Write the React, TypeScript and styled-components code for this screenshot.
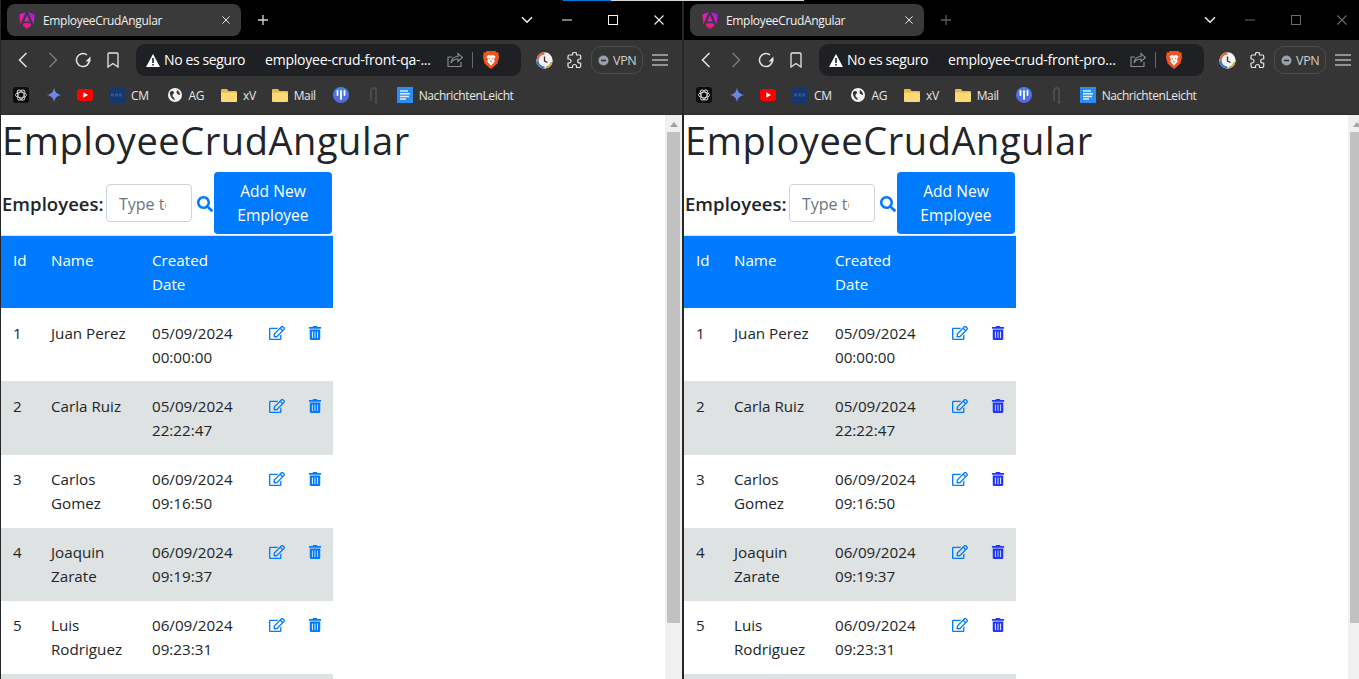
import React from "react";
import styled, { createGlobalStyle } from "styled-components";
import { FaRegEdit, FaTrashAlt, FaSearch } from "react-icons/fa";

const Global = createGlobalStyle`
  html, body { margin: 0; padding: 0; height: 100%; overflow: hidden; background: #000; }
  * { box-sizing: border-box; }
  #root { height: 679px; }
`;

const Desktop = styled.div`
  position: relative;
  display: flex;
  width: 1359px;
  height: 679px;
  overflow: hidden;
  background: #000;
  font-family: "Open Sans", "Noto Sans", sans-serif;
`;

const EdgeLine = styled.div`
  position: absolute;
  top: 0;
  left: 563px;
  width: 241px;
  height: 1px;
  background: linear-gradient(90deg, #0078d4 0 48px, #d8d8d8 48px);
`;

const Window = styled.section`
  display: flex;
  flex-direction: column;
  flex: none;
  width: 683px;
  height: 679px;
  padding: 0 1px;
  background: #262626;
`;

const TabStrip = styled.div`
  display: flex;
  align-items: flex-start;
  flex: none;
  height: 40px;
  padding: 4px 0 0 6px;
  background: #000;
  color: #fff;
`;

const Tab = styled.div`
  display: flex;
  align-items: center;
  width: 234px;
  height: 32px;
  padding: 0 11px 0 12px;
  border-radius: 8px;
  background: #3a3a3a;
`;

const TabTitle = styled.span`
  flex: 1;
  margin-left: 8px;
  font: 12px "Open Sans", sans-serif;
  letter-spacing: -0.33px;
  color: #f1f1f1;
`;

const NewTab = styled.div<{ $dim: boolean }>`
  display: flex;
  margin: 10px 0 0 16px;
  color: ${(p) => (p.$dim ? "#5e5e5e" : "#d8d8d8")};
`;

const Caption = styled.div<{ $dim: boolean }>`
  display: flex;
  align-items: center;
  height: 32px;
  margin-left: auto;
  color: ${(p) => (p.$dim ? "#6a6a6a" : "#f2f2f2")};
`;

const ChevronSlot = styled.div`
  display: flex;
  width: 12px;
  margin-right: 11px;
  color: #f2f2f2;
`;

const CaptionSlot = styled.div`
  display: flex;
  justify-content: center;
  width: 46px;
`;

const Toolbar = styled.div`
  display: flex;
  align-items: center;
  flex: none;
  height: 36px;
  padding: 4px 0 0 12px;
  background: #353535;
  color: #e6e6e6;
`;

const NavGroup = styled.div`
  display: flex;
  align-items: center;
  gap: 11px;
  margin-right: 14px;
`;

const NavIcon = styled.div<{ $dim?: boolean }>`
  display: flex;
  width: 19px;
  justify-content: center;
  color: ${(p) => (p.$dim ? "#7b7b7b" : "#e6e6e6")};
`;

const Omnibox = styled.div`
  display: flex;
  align-items: center;
  flex: none;
  width: 385px;
  height: 32px;
  padding: 0 22px 0 10px;
  border-radius: 9px;
  background: #1f2023;
  color: #fff;
  font: 14px "Open Sans", sans-serif;
`;

const SecurityText = styled.span`
  flex: none;
  width: 101px;
  margin-left: 4px;
  padding-bottom: 2px;
  letter-spacing: -0.38px;
  white-space: nowrap;
`;

const UrlText = styled.span`
  flex: 1;
  padding-bottom: 2px;
  letter-spacing: -0.22px;
  white-space: nowrap;
  overflow: hidden;
`;

const OmniDivider = styled.span`
  flex: none;
  width: 1px;
  height: 16px;
  margin: 0 10px 0 9px;
  background: #6a6a6a;
`;

const ToolGroup = styled.div`
  display: flex;
  align-items: center;
  margin-left: 8px;
`;

const ToolSlot = styled.div`
  display: flex;
  justify-content: center;
  width: 30px;
`;

const VpnPill = styled.div`
  display: flex;
  align-items: center;
  gap: 4px;
  width: 52px;
  height: 28px;
  margin-left: 2px;
  padding-left: 6px;
  border: 1px solid #4a4a4a;
  border-radius: 10px;
  font: 12.5px "Open Sans", sans-serif;
  letter-spacing: -0.3px;
  color: #cfcfcf;
`;

const MenuSlot = styled.div`
  display: flex;
  margin-left: 9px;
  color: #f0f0f0;
`;

const Bookmarks = styled.nav`
  display: flex;
  align-items: center;
  flex: none;
  height: 39px;
  padding: 0 0 0 12px;
  background: #353535;
  border-bottom: 1px solid #2c2c2c;
`;

const Bookmark = styled.div<{ $after?: number; $inner?: number }>`
  display: flex;
  align-items: center;
  gap: ${(p) => p.$inner ?? 6}px;
  margin-right: ${(p) => p.$after ?? 0}px;
  font: 12px "Open Sans", sans-serif;
  letter-spacing: -0.4px;
  color: #e8e8e8;
`;

const Viewport = styled.div`
  display: flex;
  flex: 1;
  min-height: 0;
  background: #fff;
`;

const Page = styled.main`
  flex: 1;
  min-width: 0;
  overflow: hidden;
  color: #212529;
  font: 16px/24px "Open Sans", "Noto Sans", sans-serif;
`;

const Heading = styled.h1`
  margin: 1px 0 8px 1px;
  font-size: 38px;
  font-weight: 400;
  letter-spacing: 0.56px;
  line-height: 48px;
  white-space: nowrap;
`;

const SearchRow = styled.div`
  display: flex;
  align-items: center;
  width: 332px;
  height: 62px;
  margin-bottom: 1px;
  padding-left: 1px;
`;

const SearchLabel = styled.label`
  flex: none;
  width: 102px;
  margin-right: 2px;
  padding-top: 2px;
  font-size: 18.5px;
  font-weight: 600;
  letter-spacing: 0.05px;
  white-space: nowrap;
`;

const SearchInput = styled.input`
  flex: none;
  width: 86px;
  height: 38px;
  padding: 8px 25px 6px 12px;
  border: 1px solid #ced4da;
  border-radius: 4px;
  font: 16px "Open Sans", sans-serif;
  &::placeholder { color: #6c757d; opacity: 1; }
`;

const SearchIcon = styled.div`
  display: flex;
  flex: none;
  margin: 2px 1px 0 5px;
  color: #007bff;
`;

const AddButton = styled.button`
  flex: none;
  width: 118px;
  height: 62px;
  padding: 6px 12px;
  border: 0;
  border-radius: 4px;
  background: #007bff;
  color: #fff;
  font: 15.6px/24px "Open Sans", sans-serif;
`;

const Table = styled.table`
  width: 332px;
  border-collapse: separate;
  border-spacing: 0;
  border-top: 1px solid #dee2e6;
  table-layout: fixed;
  font-size: 15.2px;
`;

const HeadRow = styled.tr`
  height: 72px;
  background: #007bff;
  color: #fff;
`;

const Th = styled.th<{ $w: number }>`
  width: ${(p) => p.$w}px;
  padding: 12px;
  font-weight: 400;
  text-align: left;
  vertical-align: top;
`;

const Row = styled.tr<{ $striped: boolean; $h: number }>`
  height: ${(p) => p.$h}px;
  background: ${(p) => (p.$striped ? "#dee2e2" : "#fff")};
`;

const Td = styled.td<{ $top: number }>`
  padding: ${(p) => p.$top}px 12px 0;
  vertical-align: top;
`;

const ActionCell = styled.td<{ $top: number }>`
  padding: ${(p) => p.$top}px 0 0;
  vertical-align: top;
`;

const Actions = styled.div<{ $trash: string }>`
  display: flex;
  align-items: center;
  gap: 23px;
  height: 24px;
  padding-left: 14px;
  color: #007bff;
  & > svg:last-child { color: ${(p) => p.$trash}; }
`;

const Scrollbar = styled.aside`
  display: flex;
  flex-direction: column;
  align-items: center;
  flex: none;
  width: 17px;
  background: #f0f0f0;
`;

const ScrollArrow = styled.div`
  flex: none;
  width: 0;
  height: 0;
  margin: 7px 0 5px;
  border-left: 4px solid transparent;
  border-right: 4px solid transparent;
  border-bottom: 5px solid #a3a3a3;
`;

const ScrollThumb = styled.div`
  flex: none;
  width: 13px;
  height: 491px;
  background: #c1c1c1;
`;

const rows = [
  { id: "1", name: "Juan Perez", date: "05/09/2024", time: "00:00:00", h: 73, top: 13 },
  { id: "2", name: "Carla Ruiz", date: "05/09/2024", time: "22:22:47", h: 74, top: 13 },
  { id: "3", name: "Carlos Gomez", date: "06/09/2024", time: "09:16:50", h: 73, top: 12 },
  { id: "4", name: "Joaquin Zarate", date: "06/09/2024", time: "09:19:37", h: 73, top: 12 },
  { id: "5", name: "Luis Rodriguez", date: "06/09/2024", time: "09:23:31", h: 73, top: 12 },
  { id: "", name: "", date: "", time: "", h: 73, top: 12 },
];

const AngularIcon = () => (
  <svg width="16" height="17" viewBox="0 0 16 17">
    <defs>
      <linearGradient id="ng" x1="0.9" y1="0" x2="0.2" y2="1">
        <stop offset="0" stopColor="#a01cf0" />
        <stop offset="0.5" stopColor="#e01ac0" />
        <stop offset="1" stopColor="#ff1060" />
      </linearGradient>
    </defs>
    <path d="M6.800 0 .3 2.400 1.400 12.500zM9.200 0l6.500 2.400-1.100 10.100zM8 3 5.300 9.600h5.400zM4.700 11.200h6.600l1 2.300L8 17l-4.300-3.500z" fill="url(#ng)" />
  </svg>
);

const Close = ({ size = 10 }: { size?: number }) => (
  <svg width={size} height={size} viewBox="0 0 10 10" stroke="currentColor" strokeWidth="1.100" fill="none">
    <path d="M.5.5l9 9M9.500.5l-9 9" />
  </svg>
);

const Warning = () => (
  <svg width="14" height="13" viewBox="0 0 14 13" style={{ flex: "none" }}>
    <path d="M7 0 14 13H0z" fill="#fff" />
    <path d="M6.200 4h1.600v5H6.200zM6.200 10h1.600v1.600H6.200z" fill="#1f2023" />
  </svg>
);

const Brave = () => (
  <svg width="16" height="18" viewBox="0 0 16 18" style={{ flex: "none" }}>
    <path d="M3.500 0h9l1 1.400 1.800-.2.700 5.200-1.600 6L9.500 17 8 18l-1.500-1-4.900-4.600L0 6.400l.7-5.200 1.800.2z" fill="#f4511e" />
    <path d="M3.400 5.600 6 3.800l2 .7 2-.7 2.600 1.800-1.700 2.800.9 2.200L8 14.800l-3.800-4.200.9-2.200z" fill="#fff" />
    <path d="M5.800 7.300 7 8M10.200 7.300 9 8M8 9.500v2" stroke="#f4511e" strokeWidth="1" fill="none" />
  </svg>
);

const HistoryBadge = () => (
  <svg width="17" height="17" viewBox="0 0 17 17">
    <circle cx="8.500" cy="8.500" r="8.200" fill="#f3f3f3" />
    <path d="M1.500 8.500A7 7 0 0 1 8.500 1.500" stroke="#e8623a" strokeWidth="2.200" fill="none" />
    <path d="M8.500 15.500A7 7 0 0 1 1.500 8.500" stroke="#3a78c9" strokeWidth="2.200" fill="none" />
    <path d="M8.500 4.500v4.500l3 1.500" stroke="#333" strokeWidth="1.300" fill="none" />
    <path d="M15.500 10A7 7 0 0 1 10 15.400" stroke="#caa23a" strokeWidth="1.600" fill="none" />
  </svg>
);

const Puzzle = () => (
  <svg width="17" height="17" viewBox="0 0 17 17" fill="none" stroke="#e6e6e6" strokeWidth="1.200" strokeLinejoin="round">
    <path d="M6.500 3V2.200a2 2 0 0 1 4 0V3h3.200a1 1 0 0 1 1 1v3h-1a2 2 0 0 0 0 4h1v3a1.500 1.500 0 0 1-1.500 1.500H10.500v-1a2 2 0 0 0-4 0v1H3.500A1.500 1.500 0 0 1 2 14v-3h1a2 2 0 0 0 0-4H2V4.500A1.500 1.500 0 0 1 3.500 3z" />
  </svg>
);

const GptIcon = () => (
  <svg width="16" height="16" viewBox="0 0 16 16">
    <rect width="16" height="16" rx="3" fill="#0c0c0c" />
    <g fill="none" stroke="#cfcfcf" strokeWidth=".9">
      <ellipse cx="8" cy="8" rx="5.500" ry="2.800" />
      <ellipse cx="8" cy="8" rx="5.500" ry="2.800" transform="rotate(60 8 8)" />
      <ellipse cx="8" cy="8" rx="5.500" ry="2.800" transform="rotate(-60 8 8)" />
    </g>
  </svg>
);

const GeminiIcon = () => (
  <svg width="16" height="16" viewBox="0 0 16 16">
    <defs>
      <linearGradient id="gem" x1="0" y1="1" x2="1" y2="0">
        <stop offset="0" stopColor="#8a70d8" />
        <stop offset="1" stopColor="#4f9df5" />
      </linearGradient>
    </defs>
    <path d="M8 .5C8.500 5 11 7.500 15.500 8 11 8.500 8.500 11 8 15.500 7.500 11 5 8.500.5 8 5 7.500 7.500 5 8 .5z" fill="url(#gem)" />
  </svg>
);

const YouTubeIcon = () => (
  <svg width="16" height="12" viewBox="0 0 16 12">
    <rect width="16" height="12" rx="3" fill="#f00" />
    <path d="M6.300 3.300 11 6 6.300 8.700z" fill="#fff" />
  </svg>
);

const CmIcon = () => (
  <svg width="16" height="16" viewBox="0 0 16 16">
    <rect width="16" height="16" fill="#16386e" />
    <path d="M2 8h12" stroke="#2f5592" strokeWidth="3" strokeDasharray="3 1" />
  </svg>
);

const GlobeIcon = () => (
  <svg width="14" height="14" viewBox="0 0 14 14">
    <circle cx="7" cy="7" r="7" fill="#f3f3f3" />
    <path d="M2 4c2-2 4-1 4 .5S4 6 4.500 8 7 9 6.500 12C4 11 1.500 8 2 4zM9 2c2 1 3 3 3 5-1.500 0-3-1-3.500-2.500z" fill="#333" />
  </svg>
);

const FolderIcon = () => (
  <svg width="16" height="13" viewBox="0 0 16 13">
    <path d="M0 1.200C0 .5.500 0 1.200 0H6l1.500 2h7.300c.7 0 1.200.5 1.200 1.200v8.600c0 .7-.5 1.200-1.200 1.200H1.200C.5 13 0 12.500 0 11.800z" fill="#e9b949" />
    <path d="M0 3.500h16v8.300c0 .7-.5 1.200-1.200 1.200H1.200C.5 13 0 12.500 0 11.800z" fill="#fbd977" />
  </svg>
);

const PipeIcon = () => (
  <svg width="16" height="16" viewBox="0 0 16 16">
    <defs>
      <linearGradient id="pipe" x1="0" y1="0" x2="0" y2="1">
        <stop offset="0" stopColor="#3f88ee" />
        <stop offset="1" stopColor="#5a62d8" />
      </linearGradient>
    </defs>
    <circle cx="8" cy="8" r="8" fill="url(#pipe)" />
    <path d="M4.500 4v4M8 4v8M11.500 4v4" stroke="#fff" strokeWidth="1.800" strokeLinecap="round" />
  </svg>
);

const HookIcon = () => (
  <svg width="10" height="17" viewBox="0 0 10 17" fill="none" stroke="#4b4b4b" strokeWidth="2">
    <path d="M2 14V3.500a2.500 2.500 0 0 1 5 0V14" />
    <path d="M5.500 14 7 16l1.500-2" />
  </svg>
);

const DocIcon = () => (
  <svg width="16" height="16" viewBox="0 0 16 16">
    <rect width="16" height="16" fill="#2a8cf5" />
    <path d="M3 4h8M3 6.700h10M3 9.400h9M3 12.100h6" stroke="#e4f0ff" strokeWidth="1.500" />
  </svg>
);

const NavBack = () => (
  <svg width="10" height="16" viewBox="0 0 10 16" fill="none" stroke="currentColor" strokeWidth="1.500"><path d="M8.500 1 1.500 8l7 7" /></svg>
);
const NavForward = () => (
  <svg width="10" height="16" viewBox="0 0 10 16" fill="none" stroke="currentColor" strokeWidth="1.500"><path d="M1.500 1l7 7-7 7" /></svg>
);
const Reload = () => (
  <svg width="16" height="16" viewBox="0 0 16 16" fill="none" stroke="currentColor" strokeWidth="1.500">
    <path d="M14.500 8A6.500 6.500 0 1 1 12 2.900" />
    <path d="M15.500 4.500V9.500H10.500z" fill="currentColor" stroke="none" />
  </svg>
);
const BookmarkGlyph = () => (
  <svg width="12" height="16" viewBox="0 0 12 16" fill="none" stroke="currentColor" strokeWidth="1.300"><path d="M1 2a1 1 0 0 1 1-1h8a1 1 0 0 1 1 1v13L6 11.500 1 15z" /></svg>
);
const Share = () => (
  <svg width="16" height="16" viewBox="0 0 16 16" fill="none" stroke="#8c8c8c" strokeWidth="1.200" style={{ flex: "none" }}>
    <path d="M14 10v4.500H1V5h4" />
    <path d="M4 11c.5-4.500 3.500-6.500 7-6.500V1.500L15.500 5.500 11 9.500V7c-3 0-5.500 1-7 4z" />
  </svg>
);
const Plus = () => (
  <svg width="12" height="12" viewBox="0 0 12 12" stroke="currentColor" strokeWidth="1.300"><path d="M6 1v10M1 6h10" /></svg>
);
const Chevron = () => (
  <svg width="12" height="8" viewBox="0 0 12 8" fill="none" stroke="currentColor" strokeWidth="1.500"><path d="M1 1.200 6 6.200l5-5" /></svg>
);
const Minimize = () => (
  <svg width="12" height="2" viewBox="0 0 12 2" stroke="currentColor"><path d="M1 1h10" /></svg>
);
const Maximize = () => (
  <svg width="10" height="10" viewBox="0 0 10 10" fill="none" stroke="currentColor"><rect x=".5" y=".5" width="9" height="9" /></svg>
);
const Hamburger = () => (
  <svg width="16" height="12" viewBox="0 0 16 12" stroke="currentColor" strokeWidth="1.200"><path d="M0 1h16M0 6h16M0 11h16" /></svg>
);
const VpnDot = () => (
  <svg width="11" height="11" viewBox="0 0 11 11">
    <circle cx="5.500" cy="5.500" r="5" fill="#9a9fb0" />
    <path d="M3 5.500h5" stroke="#2f2f2f" strokeWidth="1.500" />
  </svg>
);

const BrowserWindow = ({ url, focused, trash }: { url: string; focused: boolean; trash: string }) => (
  <Window>
    <TabStrip>
      <Tab>
        <AngularIcon />
        <TabTitle>EmployeeCrudAngular</TabTitle>
        <Close size={8} />
      </Tab>
      <NewTab $dim={!focused}><Plus /></NewTab>
      <Caption $dim={!focused}>
        <ChevronSlot><Chevron /></ChevronSlot>
        <CaptionSlot><Minimize /></CaptionSlot>
        <CaptionSlot><Maximize /></CaptionSlot>
        <CaptionSlot><Close /></CaptionSlot>
      </Caption>
    </TabStrip>
    <Toolbar>
      <NavGroup>
        <NavIcon><NavBack /></NavIcon>
        <NavIcon $dim><NavForward /></NavIcon>
        <NavIcon><Reload /></NavIcon>
        <NavIcon><BookmarkGlyph /></NavIcon>
      </NavGroup>
      <Omnibox>
        <Warning />
        <SecurityText>No es seguro</SecurityText>
        <UrlText>{url}</UrlText>
        <Share />
        <OmniDivider />
        <Brave />
      </Omnibox>
      <ToolGroup>
        <ToolSlot><HistoryBadge /></ToolSlot>
        <ToolSlot><Puzzle /></ToolSlot>
        <VpnPill><VpnDot />VPN</VpnPill>
        <MenuSlot><Hamburger /></MenuSlot>
      </ToolGroup>
    </Toolbar>
    <Bookmarks>
      <Bookmark $after={17}><GptIcon /></Bookmark>
      <Bookmark $after={15}><GeminiIcon /></Bookmark>
      <Bookmark $after={16}><YouTubeIcon /></Bookmark>
      <Bookmark $after={19}><CmIcon />CM</Bookmark>
      <Bookmark $after={17} $inner={7}><GlobeIcon />AG</Bookmark>
      <Bookmark $after={16}><FolderIcon />xV</Bookmark>
      <Bookmark $after={17}><FolderIcon />Mail</Bookmark>
      <Bookmark $after={20}><PipeIcon /></Bookmark>
      <Bookmark $after={18}><HookIcon /></Bookmark>
      <Bookmark><DocIcon />NachrichtenLeicht</Bookmark>
    </Bookmarks>
    <Viewport>
      <Page>
        <Heading>EmployeeCrudAngular</Heading>
        <SearchRow>
          <SearchLabel>Employees:</SearchLabel>
          <SearchInput placeholder="Type to search" />
          <SearchIcon><FaSearch size={16} /></SearchIcon>
          <AddButton>Add New Employee</AddButton>
        </SearchRow>
        <Table>
          <thead>
            <HeadRow>
              <Th $w={38}>Id</Th>
              <Th $w={101}>Name</Th>
              <Th $w={115}>Created<br />Date</Th>
              <Th $w={78} />
            </HeadRow>
          </thead>
          <tbody>
            {rows.map((r, i) => (
              <Row key={i} $striped={i % 2 === 1} $h={r.h}>
                <Td $top={r.top}>{r.id}</Td>
                <Td $top={r.top}>{r.name}</Td>
                <Td $top={r.top}>{r.date}<br />{r.time}</Td>
                <ActionCell $top={r.top}>
                  {r.id && (
                    <Actions $trash={trash}>
                      <FaRegEdit size={16} />
                      <FaTrashAlt size={14} />
                    </Actions>
                  )}
                </ActionCell>
              </Row>
            ))}
          </tbody>
        </Table>
      </Page>
      <Scrollbar>
        <ScrollArrow />
        <ScrollThumb />
      </Scrollbar>
    </Viewport>
  </Window>
);

export default function App() {
  return (
    <Desktop>
      <Global />
      <BrowserWindow url="employee-crud-front-qa-..." focused trash="#007bff" />
      <BrowserWindow url="employee-crud-front-pro..." focused={false} trash="#1f35ff" />
      <EdgeLine />
    </Desktop>
  );
}
